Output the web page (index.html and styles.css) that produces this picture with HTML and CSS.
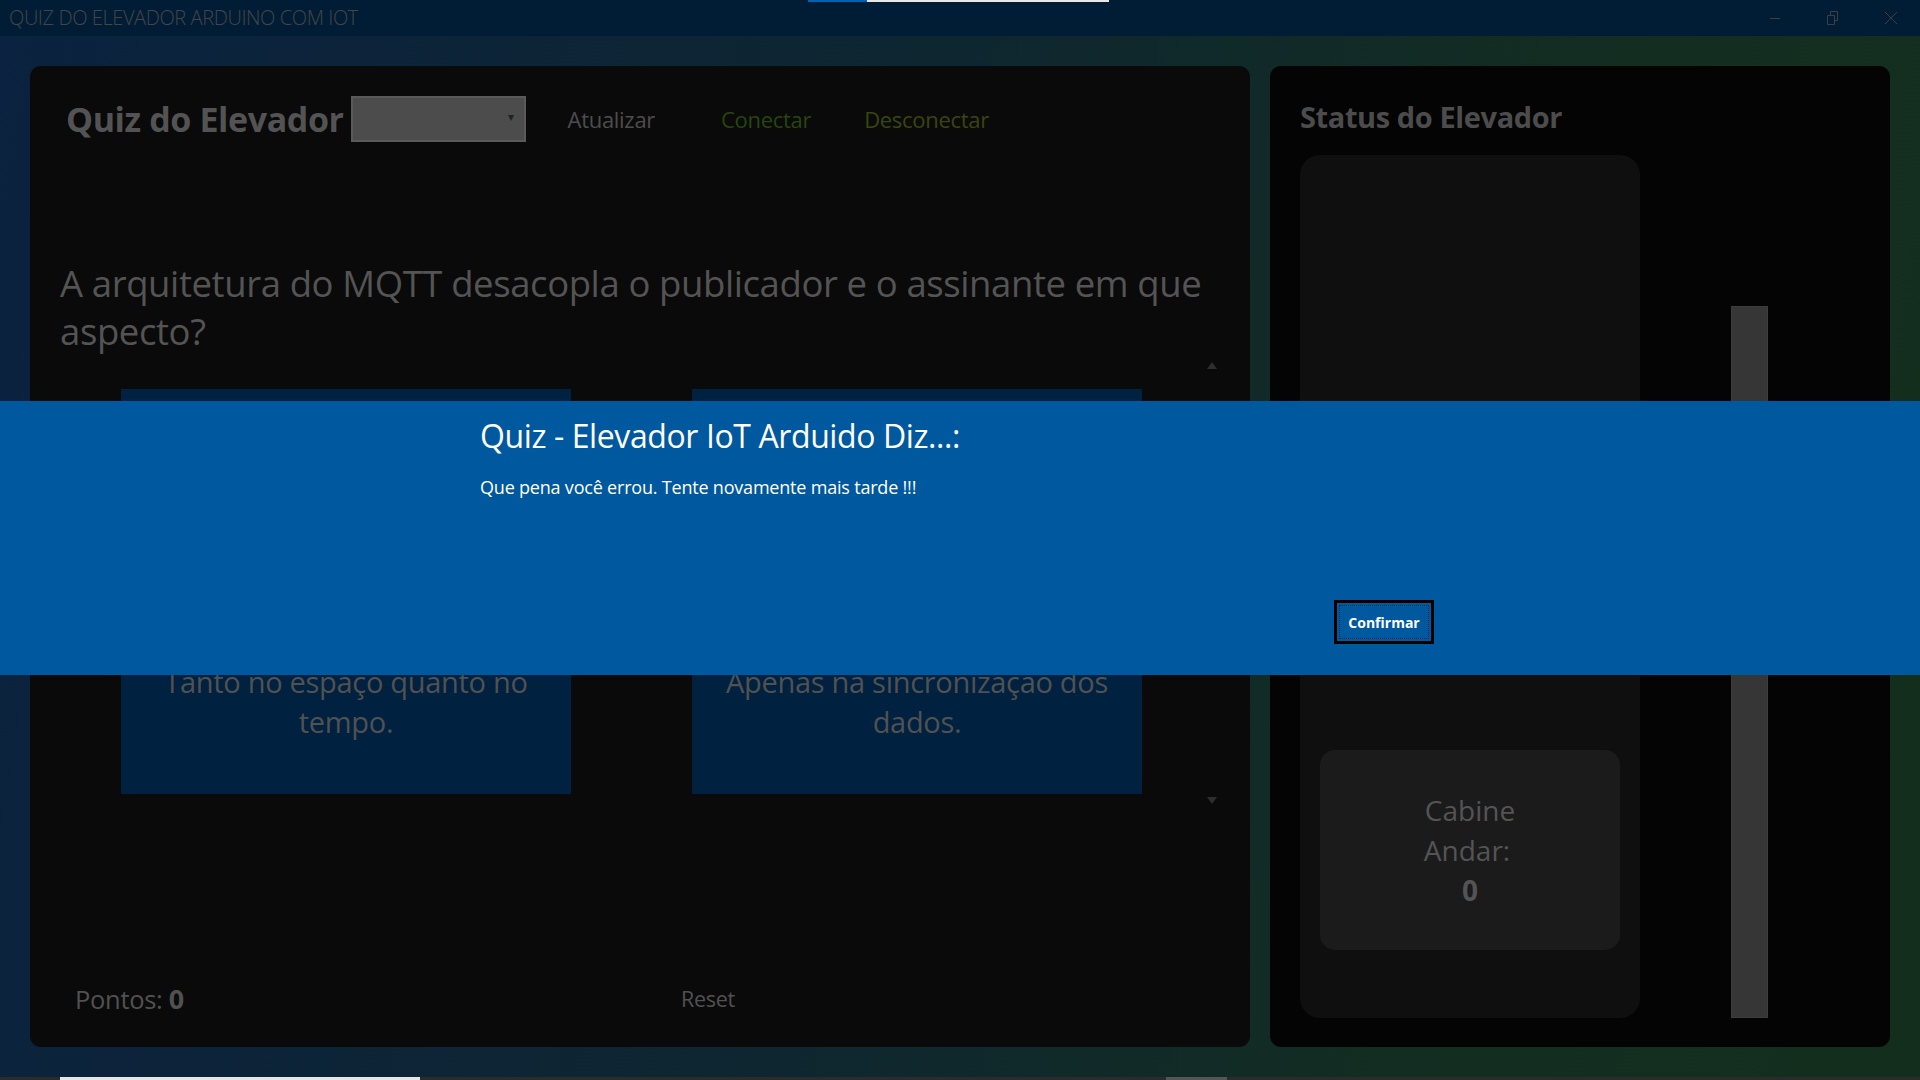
FILE: index.html
```html
<!DOCTYPE html>
<html lang="pt-BR">
<head>
<meta charset="utf-8">
<title>Quiz do Elevador Arduino com IoT</title>
<link rel="stylesheet" href="styles.css">
</head>
<body>
<div class="app">
  <div class="topline"><span class="tl-blue"></span><span class="tl-white"></span></div>
  <header class="titlebar">
    <span class="app-title">QUIZ DO ELEVADOR ARDUINO COM IOT</span>
    <div class="win-controls">
      <span class="wc wc-min"><svg width="12" height="12" viewBox="0 0 12 12"><path d="M1 6.5h10" stroke="#3f3f3f" stroke-width="1"/></svg></span>
      <span class="wc wc-max"><svg width="12" height="14" viewBox="0 0 12 14"><path d="M0.5 4.5h7v9h-7z M3.5 4.5v-4h7v9h-3" fill="none" stroke="#3f3f3f" stroke-width="1"/></svg></span>
      <span class="wc wc-close"><svg width="14" height="14" viewBox="0 0 14 14"><path d="M1 1l12 12M13 1L1 13" stroke="#3f3f3f" stroke-width="1"/></svg></span>
    </div>
  </header>

  <main class="content">
    <section class="quiz-panel">
      <div class="quiz-header">
        <h1 class="quiz-title">Quiz do Elevador</h1>
        <div class="combo"><span class="combo-arrow">▾</span></div>
        <span class="hbtn hbtn-update">Atualizar</span>
        <span class="hbtn hbtn-connect">Conectar</span>
        <span class="hbtn hbtn-disconnect">Desconectar</span>
      </div>

      <p class="question">A arquitetura do MQTT desacopla o publicador e o assinante em que aspecto?</p>

      <div class="answers-area">
        <div class="answers">
          <div class="answer">Tanto no espaço quanto no tempo.</div>
          <div class="answer">Apenas na sincronização dos dados.</div>
        </div>
        <div class="scrollbar">
          <svg class="sb-arrow" width="10" height="7" viewBox="0 0 10 7"><path d="M5 0L10 7H0z" fill="#2e2e2e"/></svg>
          <svg class="sb-arrow" width="10" height="7" viewBox="0 0 10 7"><path d="M0 0H10L5 7z" fill="#2e2e2e"/></svg>
        </div>
      </div>

      <footer class="quiz-footer">
        <span class="points">Pontos: <b>0</b></span>
        <span class="reset">Reset</span>
      </footer>
    </section>

    <section class="status-panel">
      <h2 class="status-title">Status do Elevador</h2>
      <div class="status-body">
        <div class="shaft">
          <div class="cabin">
            <span>Cabine</span>
            <span>Andar:</span>
            <b>0</b>
          </div>
        </div>
        <div class="slider-col">
          <div class="slider"></div>
        </div>
      </div>
    </section>
  </main>

  <div class="bottomline"><span class="bl-white"></span><span class="bl-grey"></span></div>
</div>

<div class="dialog">
  <div class="dialog-inner">
    <h3 class="dialog-title">Quiz - Elevador IoT Arduido Diz...:</h3>
    <p class="dialog-text">Que pena você errou. Tente novamente mais tarde !!!</p>
    <div class="dialog-actions">
      <button class="dialog-btn"><span>Confirmar</span></button>
    </div>
  </div>
</div>
</body>
</html>
```

FILE: styles.css
```css
* { box-sizing: border-box; }
html, body { margin: 0; padding: 0; }
body {
  width: 1920px;
  height: 1080px;
  overflow: hidden;
  font-family: "Open Sans", "Noto Sans", sans-serif;
  background: linear-gradient(100deg, #0b2240 0%, #0e2630 45%, #132d22 75%, #142e1d 100%);
  position: relative;
}
.app {
  display: flex;
  flex-direction: column;
  height: 1080px;
}
.topline {
  position: absolute;
  top: 0;
  left: 808px;
  display: flex;
  height: 2px;
}
.tl-blue { width: 59px; background: #0063b1; }
.tl-white { width: 242px; background: #e8e8e8; }

.titlebar {
  height: 36px;
  flex: none;
  background: #011d35;
  display: flex;
  align-items: center;
  justify-content: space-between;
  padding-left: 9px;
}
.app-title {
  color: #454545;
  font-size: 20px;
  font-weight: 300;
  letter-spacing: -0.4px;
  margin-top: -2px;
}
.win-controls { display: flex; height: 36px; }
.wc {
  width: 58px;
  display: flex;
  align-items: center;
  justify-content: center;
}

.content {
  flex: 1;
  display: flex;
  gap: 20px;
  padding: 30px 30px 33px 30px;
}
.quiz-panel {
  width: 1220px;
  flex: none;
  background: #0a0a0a;
  border-radius: 11px;
  display: flex;
  flex-direction: column;
  padding: 30px;
}
.quiz-header {
  display: flex;
  align-items: center;
  height: 46px;
}
.quiz-title {
  margin: 0 7px 0 6px;
  font-size: 34px;
  font-weight: 700;
  color: #535353;
  letter-spacing: -0.4px;
  white-space: nowrap;
}
.combo {
  width: 175px;
  height: 46px;
  flex: none;
  background: #4c4c4c;
  border: 2px solid #5a5a5a;
  position: relative;
  margin-right: 42px;
}
.combo-arrow {
  position: absolute;
  right: 10px;
  top: 10px;
  color: #222;
  font-size: 12px;
}
.hbtn {
  font-size: 22px;
  letter-spacing: -0.3px;
  white-space: nowrap;
}
.hbtn-update { color: #4d4d4d; margin-right: 66px; }
.hbtn-connect { color: #27450e; margin-right: 53px; }
.hbtn-disconnect { color: #3a4510; }

.question {
  margin: 117px 0 0 0;
  font-size: 36.5px;
  line-height: 48px;
  color: #545454;
  letter-spacing: -0.4px;
}
.answers-area {
  margin-top: 34px;
  display: flex;
  height: 430px;
}
.answers {
  flex: 1;
  display: flex;
  gap: 121px;
  padding-left: 61px;
}
.answer {
  width: 450px;
  height: 405px;
  flex: none;
  background: #002140;
  color: #515151;
  font-size: 29px;
  line-height: 40px;
  text-align: center;
  padding: 273px 20px 0;
  letter-spacing: -0.3px;
}
.scrollbar {
  width: 20px;
  display: flex;
  flex-direction: column;
  justify-content: space-between;
  align-items: center;
  margin-right: -2px;
  height: 442px;
  margin-top: -27px;
}
.quiz-footer {
  margin-top: auto;
  display: flex;
  align-items: center;
  padding-left: 15px;
  height: 40px;
  margin-bottom: -1px;
}
.points {
  color: #515151;
  font-size: 25.5px;
  width: 606px;
  letter-spacing: -0.3px;
}
.points b { font-size: 27px; }
.reset {
  color: #515151;
  font-size: 21.5px;
  letter-spacing: -0.3px;
}

.status-panel {
  flex: 1;
  background: #040404;
  border-radius: 11px;
  padding: 31px 30px 29px 30px;
  display: flex;
  flex-direction: column;
}
.status-title {
  margin: 0 0 18px 0;
  font-size: 29px;
  font-weight: 700;
  color: #4c4c4c;
  letter-spacing: -0.4px;
  line-height: 40px;
}
.status-body {
  flex: 1;
  display: flex;
}
.shaft {
  width: 340px;
  flex: none;
  background: #0f0f0f;
  border-radius: 20px;
  display: flex;
  flex-direction: column;
  justify-content: flex-end;
  padding: 0 20px 68px 20px;
}
.cabin {
  height: 200px;
  background: #1b1b1b;
  border-radius: 15px;
  display: flex;
  flex-direction: column;
  align-items: center;
  justify-content: center;
  color: #545454;
  font-size: 28px;
  line-height: 40px;
}
.cabin span:nth-child(2) { margin-right: 6px; }
.cabin b { font-size: 28px; }
.slider-col {
  flex: none;
  display: flex;
  align-items: flex-end;
  padding-left: 91px;
}
.slider {
  width: 37px;
  height: 712px;
  background: #363636;
  border: 1px solid #3d3d3d;
}

.bottomline {
  position: absolute;
  left: 0;
  bottom: 0;
  width: 1920px;
  height: 3px;
  background: #2b2b2b;
}
.bl-white {
  position: absolute;
  left: 60px;
  width: 360px;
  height: 3px;
  background: #e6e6e6;
}
.bl-grey {
  position: absolute;
  left: 1166px;
  width: 61px;
  height: 3px;
  background: #555;
}

.dialog {
  position: absolute;
  left: 0;
  top: 401px;
  width: 1920px;
  height: 274px;
  background: #00589f;
}
.dialog-inner {
  width: 960px;
  margin-left: 480px;
  height: 100%;
  display: flex;
  flex-direction: column;
  padding-top: 13px;
}
.dialog-title {
  margin: 0;
  font-size: 32px;
  font-weight: 400;
  color: #ffffff;
  line-height: 44px;
  letter-spacing: -0.4px;
}
.dialog-text {
  margin: 17px 0 0 0;
  font-size: 18px;
  color: #ffffff;
  letter-spacing: -0.2px;
}
.dialog-actions {
  margin-top: auto;
  margin-bottom: 31px;
  display: flex;
  justify-content: flex-end;
  padding-right: 6px;
}
.dialog-btn {
  width: 100px;
  height: 44px;
  background: #00589f;
  border: 3px solid #000;
  padding: 2px;
  font-family: "Open Sans", sans-serif;
  cursor: pointer;
}
.dialog-btn span {
  display: flex;
  align-items: center;
  justify-content: center;
  width: 100%;
  height: 100%;
  border: 1px dotted #0a2a4a;
  color: #fff;
  font-weight: 700;
  font-size: 14px;
}
```
